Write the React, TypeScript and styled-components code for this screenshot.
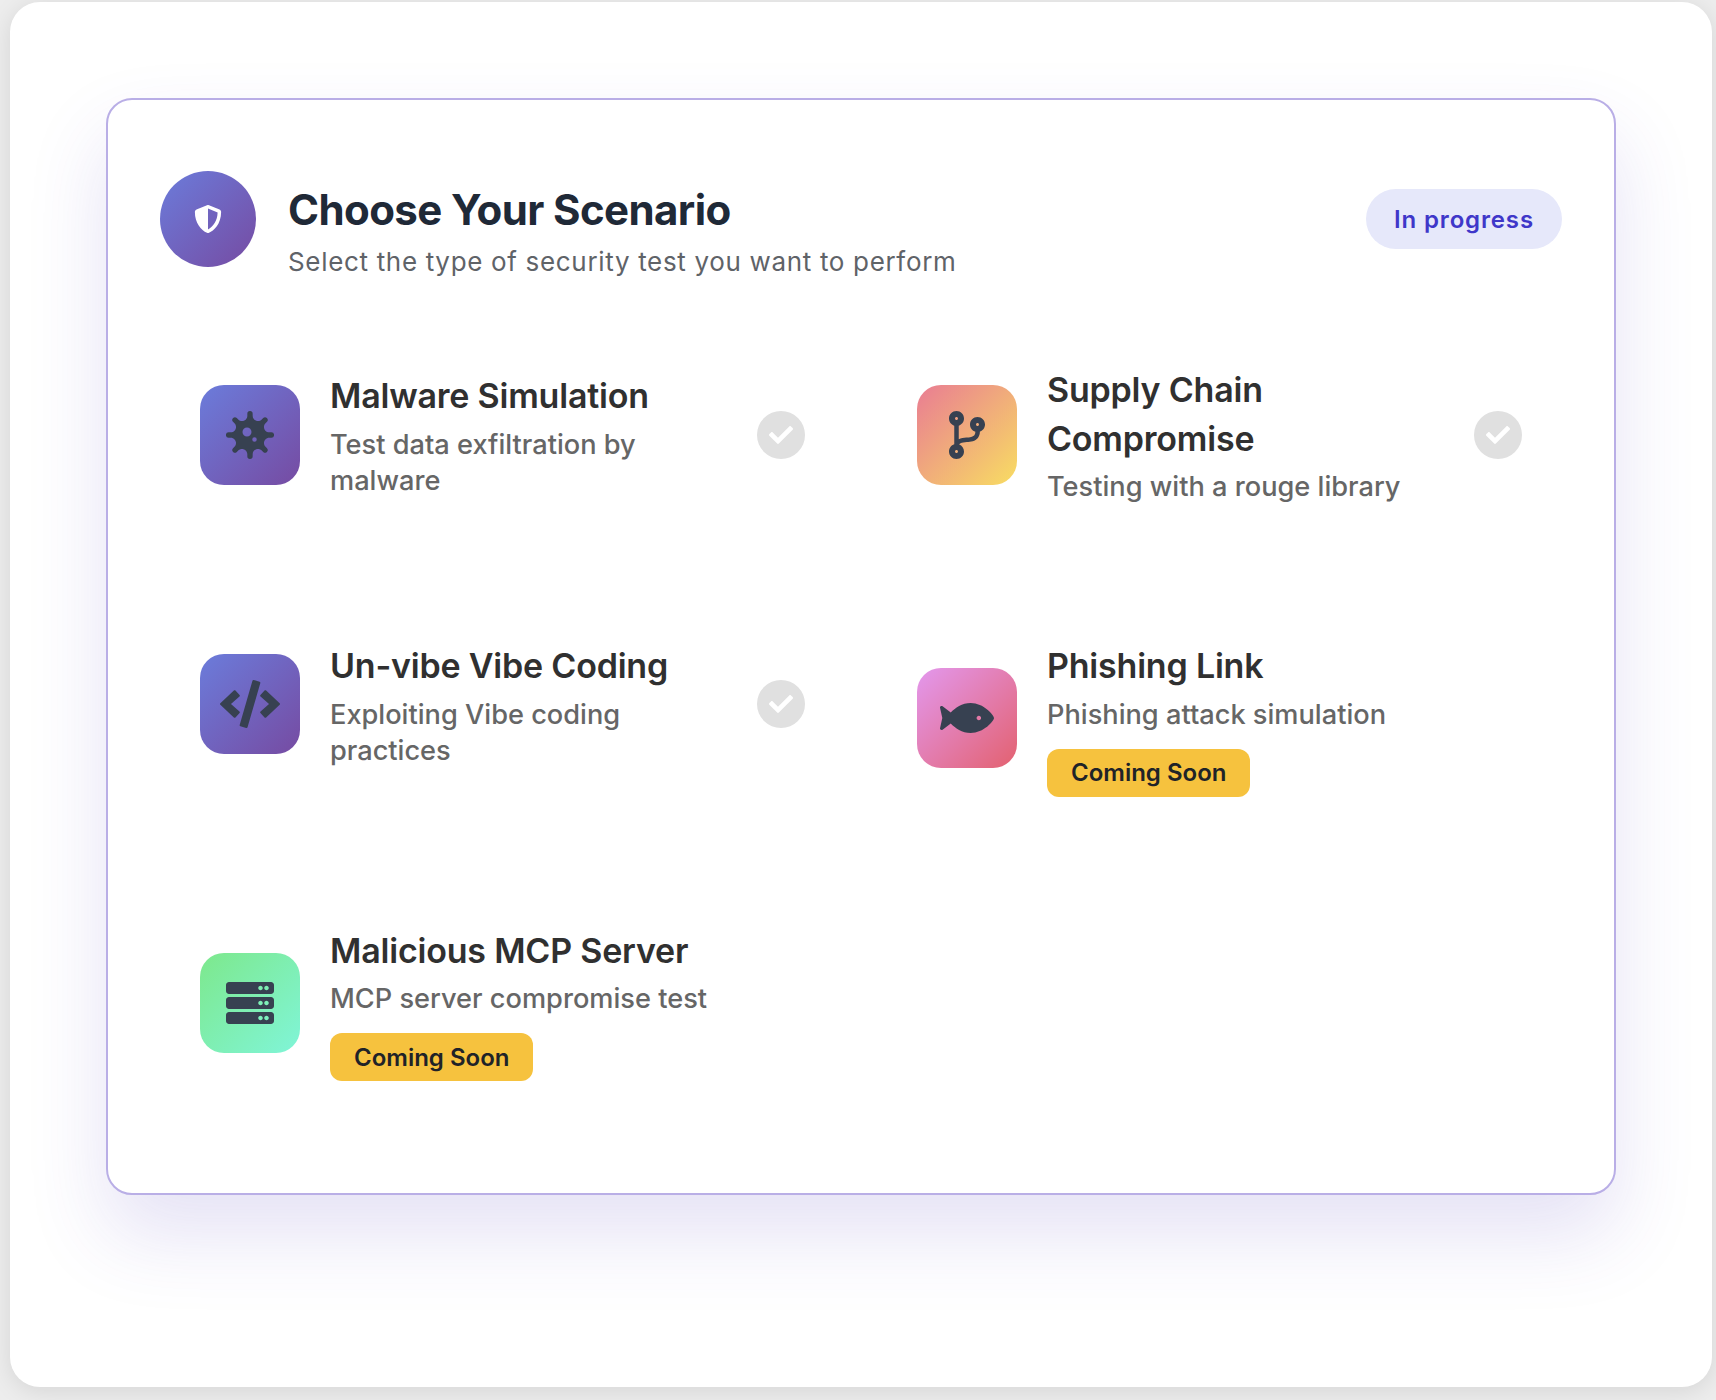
import React from 'react';
import styled, { createGlobalStyle } from 'styled-components';
import { FaCheck, FaCode, FaCodeBranch, FaFish, FaServer, FaShieldAlt, FaVirus } from 'react-icons/fa';

const GlobalStyle = createGlobalStyle`
  html, body {
    margin: 0;
    height: 1400px;
    overflow: hidden;
    background: #ededed;
    font-family: Inter, "Noto Sans", sans-serif;
  }
  * { box-sizing: border-box; }
`;

const gradients = {
  purple: 'linear-gradient(135deg, #6b7cdb 0%, #764ba2 100%)',
  sunset: 'linear-gradient(135deg, #e97c93 0%, #f8dd62 100%)',
  pink: 'linear-gradient(135deg, #e398ee 0%, #e3616f 100%)',
  mint: 'linear-gradient(135deg, #7de88c 0%, #80f5d8 100%)',
};

type Tone = keyof typeof gradients;

const Frame = styled.div`
  width: 1702px;
  height: 1385px;
  margin: 2px 0 0 10px;
  padding: 96px 96px 0;
  background: #fff;
  border-radius: 30px;
  box-shadow: 0 4px 24px rgba(0, 0, 0, 0.1);
`;

const Card = styled.section`
  height: 1097px;
  padding: 71px 52px 0 52px;
  background: #fff;
  border: 2px solid #b9aee6;
  border-radius: 26px;
  box-shadow: 0 40px 80px rgba(80, 60, 190, 0.15);
`;

const Header = styled.header`
  display: flex;
  align-items: flex-start;
  gap: 32px;
  height: 96px;
`;

const HeaderIcon = styled.div`
  flex: none;
  width: 96px;
  height: 96px;
  display: flex;
  align-items: center;
  justify-content: center;
  border-radius: 50%;
  background: ${gradients.purple};
  color: #fff;
  font-size: 28px;
`;

const HeaderText = styled.div`
  flex: 1;
  padding-top: 13px;
`;

const Title = styled.h1`
  margin: 0 0 8px;
  font-size: 42px;
  line-height: 52px;
  font-weight: 700;
  letter-spacing: -0.6px;
  color: #1f2937;
`;

const Subtitle = styled.p`
  margin: 0;
  font-size: 26px;
  line-height: 36px;
  font-weight: 400;
  letter-spacing: 0.67px;
  color: #5f6368;
`;

const StatusPill = styled.span`
  flex: none;
  align-self: center;
  width: 196px;
  height: 60px;
  display: flex;
  align-items: center;
  justify-content: center;
  border-radius: 30px;
  background: #e6e8fa;
  color: #3f37c9;
  font-size: 24px;
  font-weight: 600;
  letter-spacing: 0.85px;
`;

const Grid = styled.div`
  display: grid;
  grid-template-columns: 1fr 1fr;
  column-gap: 32px;
  row-gap: 48px;
  margin-top: 77px;
`;

const Item = styled.article<{ $centered?: boolean }>`
  display: flex;
  align-items: center;
  gap: 30px;
  padding: 20px 40px 60px;
  align-self: ${(p) => (p.$centered ? 'center' : 'start')};

  &:nth-child(-n + 2) {
    margin-bottom: 7px;
  }
`;

const ItemIcon = styled.div<{ $tone: Tone; $glyph: number }>`
  flex: none;
  width: 100px;
  height: 100px;
  display: flex;
  align-items: center;
  justify-content: center;
  border-radius: 24px;
  background: ${(p) => gradients[p.$tone]};
  color: #374151;
  font-size: ${(p) => p.$glyph}px;
`;

const ItemBody = styled.div`
  flex: 1;
  min-width: 0;
`;

const ItemTitle = styled.h2`
  margin: 0 0 6px;
  padding-top: 2px;
  font-size: 34px;
  line-height: 48.5px;
  font-weight: 585;
  letter-spacing: -0.2px;
  color: #303030;
`;

const ItemText = styled.p`
  margin: 0;
  font-size: 27.2px;
  line-height: 36px;
  font-weight: 550;
  color: #666;
`;

const SoonBadge = styled.span`
  display: inline-flex;
  align-items: center;
  height: 48px;
  margin-top: 16px;
  padding: 0 24px;
  border-radius: 12px;
  background: #f6c23e;
  color: #1f2328;
  font-size: 24px;
  font-weight: 600;
`;

const DoneMark = styled.div`
  flex: none;
  width: 48px;
  height: 48px;
  display: flex;
  align-items: center;
  justify-content: center;
  border-radius: 50%;
  background: #e0e0e0;
  color: #fff;
  font-size: 24px;
`;

const scenarios = [
  { title: 'Malware Simulation', text: 'Test data exfiltration by malware', tone: 'purple', icon: <FaVirus />, glyph: 48, done: true, centered: true },
  { title: 'Supply Chain Compromise', text: 'Testing with a rouge library', tone: 'sunset', icon: <FaCodeBranch />, glyph: 48, done: true },
  { title: 'Un-vibe Vibe Coding', text: 'Exploiting Vibe coding practices', tone: 'purple', icon: <FaCode />, glyph: 60, done: true },
  { title: 'Phishing Link', text: 'Phishing attack simulation', tone: 'pink', icon: <FaFish />, glyph: 54, soon: true },
  { title: 'Malicious MCP Server', text: 'MCP server compromise test', tone: 'mint', icon: <FaServer />, glyph: 48, soon: true },
] as { title: string; text: string; tone: Tone; icon: React.ReactNode; glyph: number; done?: boolean; soon?: boolean; centered?: boolean }[];

export default function App() {
  return (
    <>
      <GlobalStyle />
      <Frame>
        <Card>
          <Header>
            <HeaderIcon><FaShieldAlt /></HeaderIcon>
            <HeaderText>
              <Title>Choose Your Scenario</Title>
              <Subtitle>Select the type of security test you want to perform</Subtitle>
            </HeaderText>
            <StatusPill>In progress</StatusPill>
          </Header>
          <Grid>
            {scenarios.map((s) => (
              <Item key={s.title} $centered={s.centered}>
                <ItemIcon $tone={s.tone} $glyph={s.glyph}>{s.icon}</ItemIcon>
                <ItemBody>
                  <ItemTitle>{s.title}</ItemTitle>
                  <ItemText>{s.text}</ItemText>
                  {s.soon && <SoonBadge>Coming Soon</SoonBadge>}
                </ItemBody>
                {s.done && <DoneMark><FaCheck /></DoneMark>}
              </Item>
            ))}
          </Grid>
        </Card>
      </Frame>
    </>
  );
}
